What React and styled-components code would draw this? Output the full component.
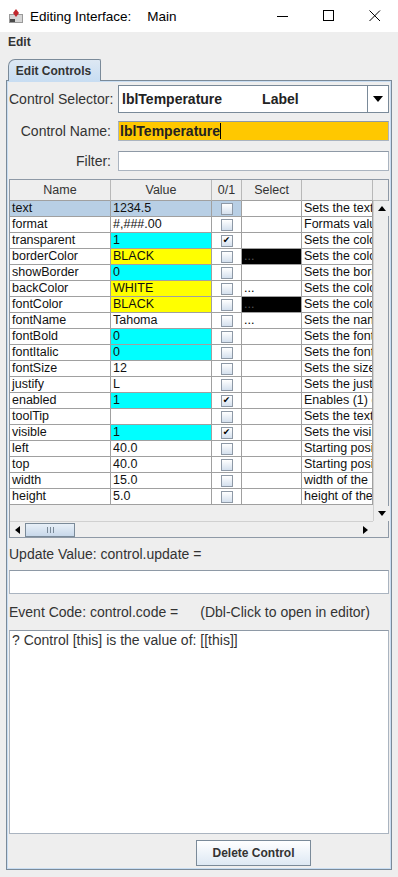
import React from 'react'
import styled, { createGlobalStyle } from 'styled-components'

const GlobalStyle = createGlobalStyle`
  html, body {
    margin: 0;
    padding: 0;
    background: #eeeeee;
  }
  body {
    font-family: "Liberation Sans", Arial, sans-serif;
    color: #000;
  }
`

const rows = [
  { name: 'text', value: '1234.5', desc: 'Sets the text', selected: true },
  { name: 'format', value: '#,###.00', desc: 'Formats value' },
  { name: 'transparent', value: '1', tint: 'cyan', checked: true, desc: 'Sets the color' },
  { name: 'borderColor', value: 'BLACK', tint: 'yellow', pick: 'dark', desc: 'Sets the color' },
  { name: 'showBorder', value: '0', tint: 'cyan', desc: 'Sets the border' },
  { name: 'backColor', value: 'WHITE', tint: 'yellow', pick: 'light', desc: 'Sets the color' },
  { name: 'fontColor', value: 'BLACK', tint: 'yellow', pick: 'dark', desc: 'Sets the color' },
  { name: 'fontName', value: 'Tahoma', pick: 'light', desc: 'Sets the name' },
  { name: 'fontBold', value: '0', tint: 'cyan', desc: 'Sets the font' },
  { name: 'fontItalic', value: '0', tint: 'cyan', desc: 'Sets the font' },
  { name: 'fontSize', value: '12', desc: 'Sets the size' },
  { name: 'justify', value: 'L', desc: 'Sets the justify' },
  { name: 'enabled', value: '1', tint: 'cyan', checked: true, desc: 'Enables (1) or' },
  { name: 'toolTip', value: '', desc: 'Sets the text' },
  { name: 'visible', value: '1', tint: 'cyan', checked: true, desc: 'Sets the visible' },
  { name: 'left', value: '40.0', desc: 'Starting position' },
  { name: 'top', value: '40.0', desc: 'Starting position' },
  { name: 'width', value: '15.0', desc: 'width of the' },
  { name: 'height', value: '5.0', desc: 'height of the' },
]

const tints = {
  cyan: '#00ffff',
  yellow: '#ffff00',
  selected: '#b8cfe5',
}

const COLS = '101px 101px 30px 60px 71px'

const App = () => {
  return (
    <>
      <GlobalStyle/>
      <Window>
        <TitleBar>
          <AppIcon viewBox="0 0 16 16">
            <rect x="1" y="6" width="14" height="9" fill="#9a9a9a"/>
            <rect x="2" y="7" width="12" height="7" fill="#d6d6d6"/>
            <path d="M8 1 L11 5 L8 9 L5 5 Z" fill="#c0282d"/>
            <rect x="2" y="11" width="5" height="3" fill="#4a4a4a"/>
          </AppIcon>
          <Title>Editing Interface:</Title>
          <Title>Main</Title>
          <WindowButtons>
            <WinButton>
              <svg width="12" height="12" viewBox="0 0 12 12"><path d="M0 6.5 H11" stroke="#000" strokeWidth="1"/></svg>
            </WinButton>
            <WinButton>
              <svg width="12" height="12" viewBox="0 0 12 12"><rect x="0.5" y="0.5" width="10" height="10" fill="none" stroke="#000"/></svg>
            </WinButton>
            <WinButton>
              <svg width="12" height="12" viewBox="0 0 12 12"><path d="M0.5 0.5 L11 11 M11 0.5 L0.5 11" stroke="#000" strokeWidth="1"/></svg>
            </WinButton>
          </WindowButtons>
        </TitleBar>

        <MenuBar>
          <MenuItem>Edit</MenuItem>
        </MenuBar>

        <TabStrip>
          <Tab>Edit Controls</Tab>
        </TabStrip>

        <Panel>
          <FormRow $height={28}>
            <FieldLabel>Control Selector:</FieldLabel>
            <Combo>
              <ComboText>
                <span>lblTemperature</span>
                <span>Label</span>
              </ComboText>
              <ComboArrow>
                <svg width="10" height="6" viewBox="0 0 10 6"><path d="M0 0 H10 L5 6 Z" fill="#000"/></svg>
              </ComboArrow>
            </Combo>
          </FormRow>

          <FormRow $height={20} $top={8}>
            <FieldLabel>Control Name:</FieldLabel>
            <TextField $bg="#ffc800" $bold>
              lblTemperature<Caret/>
            </TextField>
          </FormRow>

          <FormRow $height={20} $top={10}>
            <FieldLabel>Filter:</FieldLabel>
            <TextField/>
          </FormRow>

          <TableFrame>
            <HeaderRow>
              <HeaderCell>Name</HeaderCell>
              <HeaderCell>Value</HeaderCell>
              <HeaderCell>0/1</HeaderCell>
              <HeaderCell>Select</HeaderCell>
              <HeaderCell/>
            </HeaderRow>
            <HeaderCorner/>
            <Viewport>
              {rows.map(row => (
                <Row key={row.name}>
                  <Cell $bg={row.selected ? tints.selected : '#fff'}>{row.name}</Cell>
                  <Cell $bg={row.selected ? tints.selected : tints[row.tint] || '#fff'}>{row.value}</Cell>
                  <Cell $bg={row.selected ? tints.selected : '#fff'} $center>
                    <CheckBox>{row.checked && <Tick>✔</Tick>}</CheckBox>
                  </Cell>
                  <Cell $bg={row.pick === 'dark' ? '#000' : '#fff'} $color={row.pick === 'dark' ? '#555' : '#000'}>
                    {row.pick ? '...' : ''}
                  </Cell>
                  <Cell $bg="#fff">{row.desc}</Cell>
                </Row>
              ))}
            </Viewport>
            <VScroll>
              <ArrowButton>
                <svg width="8" height="5" viewBox="0 0 8 5"><path d="M0 5 H8 L4 0 Z" fill="#000"/></svg>
              </ArrowButton>
              <Track/>
              <ArrowButton>
                <svg width="8" height="5" viewBox="0 0 8 5"><path d="M0 0 H8 L4 5 Z" fill="#000"/></svg>
              </ArrowButton>
            </VScroll>
            <HScroll>
              <ArrowButton>
                <svg width="5" height="8" viewBox="0 0 5 8"><path d="M5 0 V8 L0 4 Z" fill="#000"/></svg>
              </ArrowButton>
              <HTrack>
                <Thumb>
                  <Grip/>
                  <Grip/>
                  <Grip/>
                </Thumb>
              </HTrack>
              <ArrowButton>
                <svg width="5" height="8" viewBox="0 0 5 8"><path d="M0 0 V8 L5 4 Z" fill="#000"/></svg>
              </ArrowButton>
            </HScroll>
            <Corner/>
          </TableFrame>

          <SectionLabel $height={32}>Update Value: control.update =</SectionLabel>
          <WideField/>
          <SectionLabel $height={36}>
            <span>Event Code: control.code =</span>
            <span>(Dbl-Click to open in editor)</span>
          </SectionLabel>
          <CodeArea>? Control [this] is the value of: [[this]]</CodeArea>

          <ButtonRow>
            <Button>Delete Control</Button>
          </ButtonRow>
        </Panel>
      </Window>
    </>
  )
}

const Window = styled.div`
    width: 398px;
    height: 877px;
    display: flex;
    flex-direction: column;
    background: #eeeeee;
    overflow: hidden;
`

const TitleBar = styled.div`
    height: 32px;
    flex: none;
    display: flex;
    align-items: center;
    background: #fff;
    padding-left: 8px;
    font-size: 13.5px;
`

const AppIcon = styled.svg`
    width: 16px;
    height: 16px;
    margin-right: 6px;
`

const Title = styled.span`
    margin-right: 16px;
    color: #000;
`

const WindowButtons = styled.div`
    margin-left: auto;
    display: flex;
    height: 100%;
`

const WinButton = styled.div`
    width: 46px;
    height: 100%;
    display: flex;
    align-items: center;
    justify-content: center;
`

const MenuBar = styled.div`
    height: 20px;
    flex: none;
    display: flex;
    align-items: center;
    padding-left: 8px;
`

const MenuItem = styled.span`
    font-size: 12px;
    font-weight: bold;
    color: #333;
`

const TabStrip = styled.div`
    height: 29px;
    flex: none;
    display: flex;
    align-items: flex-end;
    padding-left: 8px;
    position: relative;
    z-index: 1;
    margin-bottom: -1px;
`

const Tab = styled.div`
    height: 22px;
    width: 93px;
    box-sizing: border-box;
    display: flex;
    align-items: center;
    justify-content: center;
    padding-right: 2px;
    font-size: 12px;
    font-weight: bold;
    color: #333;
    background: linear-gradient(#dde8f3, #c8ddf2);
    border: 1px solid #7a8a99;
    border-bottom: none;
    border-radius: 7px 2px 0 0;
`

const Panel = styled.div`
    margin-left: 6px;
    width: 386px;
    height: 790px;
    box-sizing: border-box;
    border: 1px solid #7a8a99;
    box-shadow: inset 0 0 0 1px #c8ddf2;
    padding: 4px 2px 2px 2px;
    display: flex;
    flex-direction: column;
`

const FormRow = styled.div`
    display: flex;
    align-items: center;
    gap: 7px;
    height: ${p => p.$height}px;
    margin-top: ${p => p.$top || 0}px;
    flex: none;
`

const FieldLabel = styled.div`
    width: 102px;
    flex: none;
    text-align: right;
    font-size: 14px;
    color: #333;
    white-space: nowrap;
`

const Combo = styled.div`
    flex: 1;
    height: 100%;
    box-sizing: border-box;
    border: 1px solid #7a8a99;
    background: #fff;
    display: flex;
`

const ComboText = styled.div`
    flex: 1;
    display: flex;
    align-items: center;
    gap: 40px;
    padding-left: 3px;
    font-size: 14px;
    font-weight: bold;
    color: #222;
`

const ComboArrow = styled.div`
    width: 20px;
    border-left: 1px solid #7a8a99;
    display: flex;
    align-items: center;
    justify-content: center;
`

const TextField = styled.div`
    flex: 1;
    height: 100%;
    box-sizing: border-box;
    border: 1px solid #aab4c0;
    border-top-color: #8e99a6;
    background: ${p => p.$bg || '#fff'};
    display: flex;
    align-items: center;
    padding-left: 1px;
    font-size: 14px;
    font-weight: ${p => (p.$bold ? 'bold' : 'normal')};
    color: #222;
`

const Caret = styled.span`
    display: inline-block;
    width: 1px;
    height: 16px;
    background: #000;
`

const TableFrame = styled.div`
    margin-top: 8px;
    height: 359px;
    flex: none;
    box-sizing: border-box;
    border: 1px solid #8e99a6;
    display: grid;
    grid-template-columns: 1fr 15px;
    grid-template-rows: 21px 1fr 16px;
    background: #eeeeee;
`

const HeaderRow = styled.div`
    display: grid;
    grid-template-columns: ${COLS};
    overflow: hidden;
`

const HeaderCell = styled.div`
    box-sizing: border-box;
    border-right: 1px solid #b8b8b8;
    border-bottom: 1px solid #a0a0a0;
    display: flex;
    align-items: center;
    justify-content: center;
    font-size: 12.5px;
    color: #333;
    background: #eeeeee;
`

const HeaderCorner = styled.div`
    border-bottom: 1px solid #b8b8b8;
`

const Viewport = styled.div`
    overflow: hidden;
    background: #eeeeee;
`

const Row = styled.div`
    display: grid;
    grid-template-columns: ${COLS};
    height: 16px;
`

const Cell = styled.div`
    box-sizing: border-box;
    border-right: 1px solid #a0a0a0;
    border-bottom: 1px solid #a0a0a0;
    background: ${p => p.$bg};
    color: ${p => p.$color || '#111'};
    font-size: 12.5px;
    line-height: 15px;
    padding-left: 2px;
    white-space: nowrap;
    overflow: hidden;
    display: flex;
    align-items: center;
    justify-content: ${p => (p.$center ? 'center' : 'flex-start')};
    ${p => p.$center && 'padding-left: 0;'}
`

const CheckBox = styled.div`
    width: 12px;
    height: 12px;
    box-sizing: border-box;
    border: 1px solid #8e99a6;
    background: linear-gradient(#ffffff, #d4e0ee);
    display: flex;
    align-items: center;
    justify-content: center;
`

const Tick = styled.span`
    font-family: "DejaVu Sans", sans-serif;
    font-size: 9px;
    line-height: 1;
    color: #000;
`

const VScroll = styled.div`
    display: flex;
    flex-direction: column;
    background: #eeeeee;
    border-left: 1px solid #d0d0d0;
`

const Track = styled.div`
    flex: 1;
`

const ArrowButton = styled.div`
    width: 15px;
    height: 15px;
    flex: none;
    display: flex;
    align-items: center;
    justify-content: center;
    background: #eeeeee;
`

const HScroll = styled.div`
    display: flex;
    align-items: center;
    border-top: 1px solid #d0d0d0;
    background: #eeeeee;
`

const HTrack = styled.div`
    flex: 1;
    height: 100%;
    display: flex;
    align-items: center;
`

const Thumb = styled.div`
    width: 50px;
    height: 14px;
    box-sizing: border-box;
    border: 1px solid #7a8a99;
    background: linear-gradient(#e8f0f8, #c8d8ea);
    display: flex;
    align-items: center;
    justify-content: center;
    gap: 2px;
`

const Grip = styled.span`
    width: 1px;
    height: 6px;
    background: #7a8a99;
`

const Corner = styled.div`
    background: #eeeeee;
`

const SectionLabel = styled.div`
    height: ${p => p.$height}px;
    flex: none;
    display: flex;
    align-items: center;
    gap: 22px;
    font-size: 14px;
    color: #333;
    white-space: nowrap;
`

const WideField = styled.div`
    height: 24px;
    flex: none;
    box-sizing: border-box;
    border: 1px solid #aab4c0;
    border-top-color: #8e99a6;
    background: #fff;
`

const CodeArea = styled.div`
    height: 204px;
    flex: none;
    box-sizing: border-box;
    border: 1px solid #aab4c0;
    border-top-color: #8e99a6;
    background: #fff;
    padding: 1px 2px;
    font-size: 14px;
    color: #333;
`

const ButtonRow = styled.div`
    margin-top: 6px;
    display: flex;
    padding-left: 187px;
`

const Button = styled.button`
    width: 115px;
    height: 26px;
    box-sizing: border-box;
    border: 1px solid #7a8a99;
    background: linear-gradient(#ffffff, #dde8f3);
    font-family: "Liberation Sans", Arial, sans-serif;
    font-size: 12px;
    font-weight: bold;
    color: #333;
    padding: 0;
`

export default App
